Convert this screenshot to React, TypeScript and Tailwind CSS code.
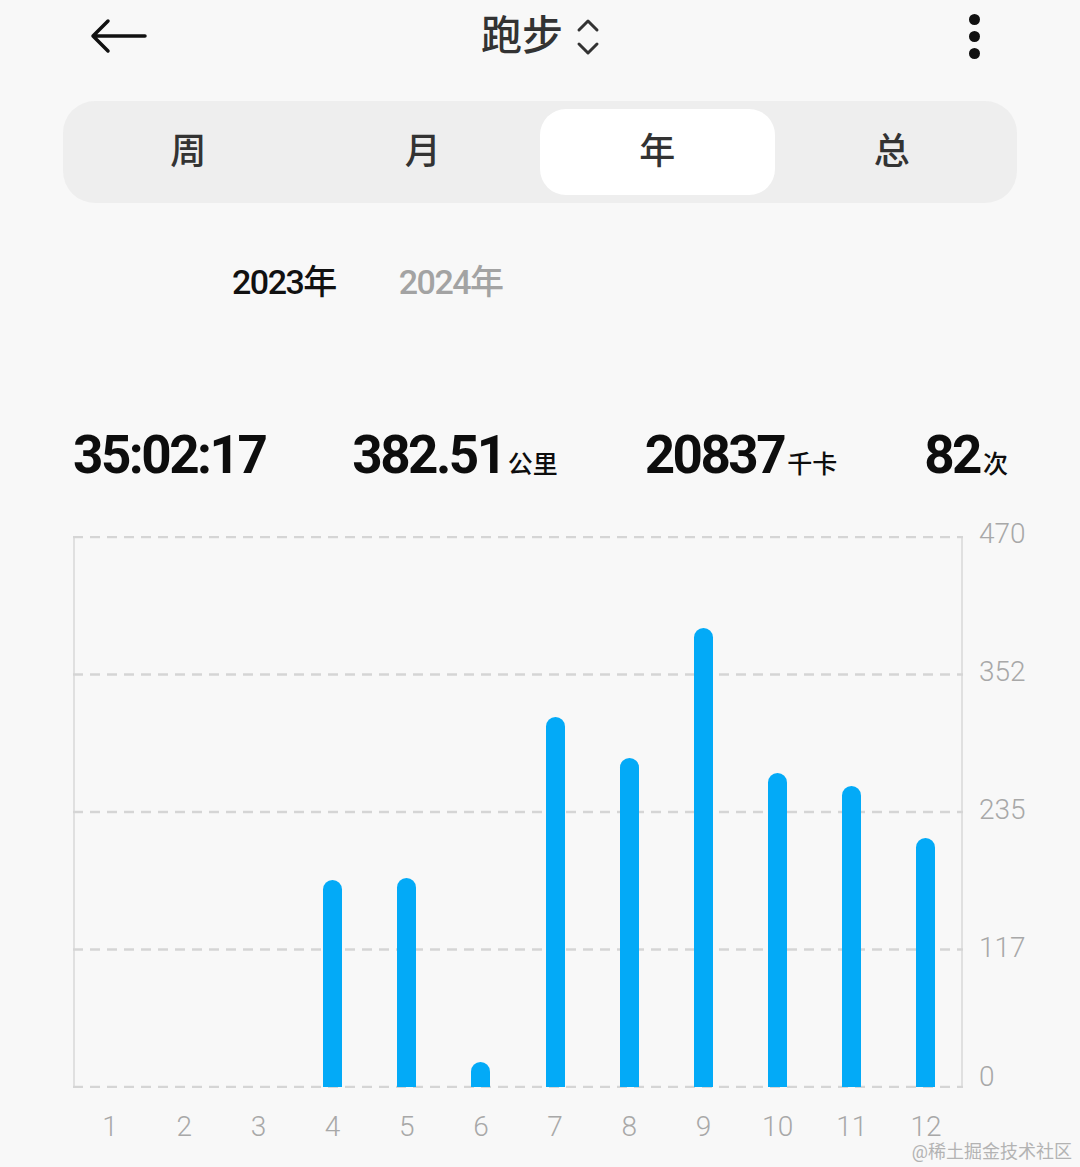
import React from "react";

type MonthStat = {
  month: number;
  minutes: number;
};

// monthly running minutes for 2023, chart max is 470
const months: MonthStat[] = [
  { month: 1, minutes: 0 },
  { month: 2, minutes: 0 },
  { month: 3, minutes: 0 },
  { month: 4, minutes: 176.6 },
  { month: 5, minutes: 178.3 },
  { month: 6, minutes: 21 },
  { month: 7, minutes: 316 },
  { month: 8, minutes: 281 },
  { month: 9, minutes: 391.5 },
  { month: 10, minutes: 268 },
  { month: 11, minutes: 257 },
  { month: 12, minutes: 212.5 },
];

const CHART_MAX = 470;
const CHART_HEIGHT = 551;

const tabs = ["周", "月", "年", "总"];

const fontStack = "font-['Roboto','Noto_Sans_CJK_SC',sans-serif]";

export default function App() {
  return (
    <div className={`relative h-[1167px] w-[1080px] overflow-hidden bg-[#f8f8f8] ${fontStack}`}>
      <Header />

      <div className="mx-[63px] mt-[29px] grid h-[102px] grid-cols-4 rounded-[32px] bg-[#eeeeee] p-[8px]">
        {tabs.map((tab) => (
          <div
            key={tab}
            className={`flex items-center justify-center rounded-[26px] text-[36px] font-medium text-[#333333] ${
              tab === "年" ? "bg-white" : ""
            }`}
          >
            {tab}
          </div>
        ))}
      </div>

      <div className="flex h-[158px] items-center gap-[63px] pl-[232px] text-[34px] font-medium tracking-[-1.5px]">
        <span className="text-[#111111]">2023年</span>
        <span className="text-[#a3a3a3]">2024年</span>
      </div>

      <div className="flex h-[175px] items-baseline justify-between pl-[73px] pr-[72px] pt-[67px] text-[#0d0d0d]">
        <Stat value="35:02:17" />
        <Stat value="382.51" unit="公里" />
        <Stat value="20837" unit="千卡" />
        <Stat value="82" unit="次" />
      </div>

      <div className="flex pl-[73px]">
        <div>
          <div className="relative flex h-[552px] w-[890px] items-end pb-[1px]">
            <svg className="absolute inset-0" width="890" height="552" viewBox="0 0 890 552">
              <line x1="1" y1="0" x2="1" y2="551" stroke="#e0e0e0" strokeWidth="2" />
              <line x1="889" y1="0" x2="889" y2="551" stroke="#e0e0e0" strokeWidth="2" />
              {[0, 1, 2, 3, 4].map((i) => {
                const y = 1 + i * 137.5;
                return (
                  <line
                    key={i}
                    x1="0"
                    y1={y}
                    x2="890"
                    y2={y}
                    stroke="#d5d5d5"
                    strokeWidth="2.5"
                    strokeDasharray="10 7"
                  />
                );
              })}
            </svg>
            <div className="relative flex h-full w-full items-end">
              {months.map((m) => (
                <div key={m.month} className="flex flex-1 justify-center">
                  {m.minutes > 0 ? (
                    <div
                      className="w-[19px] rounded-t-full bg-[#03aaf7]"
                      style={{ height: `${(m.minutes / CHART_MAX) * CHART_HEIGHT}px` }}
                    />
                  ) : null}
                </div>
              ))}
            </div>
          </div>
          <div className="mt-[25px] flex w-[890px]">
            {months.map((m) => (
              <div
                key={m.month}
                className="flex-1 text-center text-[28px] font-light leading-[28px] text-[#a8a8a8]"
              >
                {m.month}
              </div>
            ))}
          </div>
        </div>

        <div className="ml-[16px] -mt-[16px] flex flex-col text-[28px] font-light leading-[28px] text-[#a8a8a8]">
          <span>470</span>
          <span className="mt-[110px]">352</span>
          <span className="mt-[110px]">235</span>
          <span className="mt-[110px]">117</span>
          <span className="mt-[101px]">0</span>
        </div>
      </div>

      <span className="absolute bottom-[3px] right-[8px] text-[18px] leading-[24px] text-[#b3b3b3]">
        @稀土掘金技术社区
      </span>
    </div>
  );
}

function Header() {
  return (
    <div className="flex h-[72px] items-center">
      <div className="ml-[90px] flex w-[60px] items-center">
        <svg width="58" height="36" viewBox="0 0 58 36" fill="none">
          <path
            d="M3 18H55M18 3L3 18L18 33"
            stroke="#111111"
            strokeWidth="3.5"
            strokeLinecap="round"
            strokeLinejoin="round"
          />
        </svg>
      </div>

      <div className="flex flex-1 items-center justify-center gap-[12px] pl-[2px]">
        <span className="text-[41px] font-medium leading-none text-[#333333]">跑步</span>
        <svg width="26" height="40" viewBox="0 0 26 40" fill="none" className="mt-[2px]">
          <path
            d="M4 13L13 4L22 13M4 27L13 36L22 27"
            stroke="#333333"
            strokeWidth="3"
            strokeLinecap="round"
            strokeLinejoin="round"
          />
        </svg>
      </div>

      <div className="mr-[90px] flex w-[60px] justify-end pr-[10px]">
        <div className="flex flex-col gap-[6px]">
          <span className="h-[11px] w-[11px] rounded-full bg-[#111111]" />
          <span className="h-[11px] w-[11px] rounded-full bg-[#111111]" />
          <span className="h-[11px] w-[11px] rounded-full bg-[#111111]" />
        </div>
      </div>
    </div>
  );
}

type StatProps = {
  value: string;
  unit?: string;
};

function Stat({ value, unit }: StatProps) {
  return (
    <div className="flex items-baseline">
      <span className="text-[53px] font-bold leading-[54px] tracking-[-2.5px]">{value}</span>
      {unit ? <span className="ml-[3px] text-[25px] font-medium">{unit}</span> : null}
    </div>
  );
}
